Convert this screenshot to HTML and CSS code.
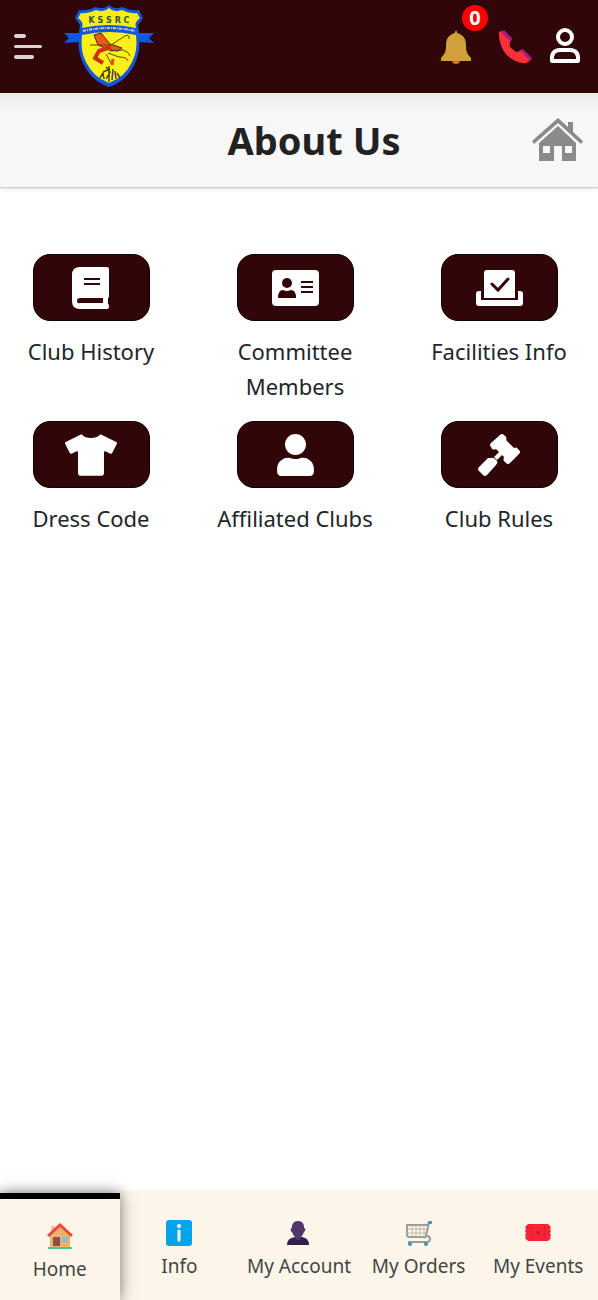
FILE: index.html
```html
<!DOCTYPE html>
<html lang="en">
<head>
<meta charset="utf-8">
<meta name="viewport" content="width=device-width, initial-scale=1">
<title>About Us</title>
<link rel="stylesheet" href="styles.css">
</head>
<body>
<header class="topbar">
  <button class="icon-button menu" aria-label="Menu"><span class="bar bar-short"></span><span class="bar bar-long"></span><span class="bar bar-mid"></span></button>
  <a class="brand" href="#" aria-label="KSSRC">
    <svg width="92" height="84" viewBox="0 0 92 84">
      <path d="M1 28L17 28 17 24 75 24 75 28 91 28 86 33 91 38 76 37 16 37 1 38 6 33Z" fill="#1157e0"/>
      <path d="M16 5Q25 6 32 2Q41 5 46 0Q51 5 60 2Q67 6 76 5L80 13 75 20Q79 44 72 58Q64 76 46 82Q28 76 20 58Q13 44 17 20L12 13Z" fill="#1157e0"/>
      <path d="M18 8Q26 9 33 5Q41 8 46 3Q51 8 59 5Q66 9 74 8L77 13Q71 17 73 23Q46 17 19 23Q21 17 15 13Z" fill="#f7ed15"/>
      <path d="M19 30Q46 24 73 30Q75 46 69 57Q62 72 46 78Q30 72 23 57Q17 46 19 30Z" fill="#fcf01b"/>
      <path d="M20 26Q46 20 72 26" fill="none" stroke="#b9d1c5" stroke-width="2" stroke-dasharray="3 1 1 1"/>
      <text class="crest-text" x="46" y="18" text-anchor="middle">K S S R C</text>
      <path d="M31 30L38 28 47 39 59 43 55 46 46 45 35 40Z" fill="#e85a16" stroke="#4d2812"/>
      <path d="M48 42L36 46 32 53 40 58" fill="none" stroke="#ce3213" stroke-width="4"/>
      <path d="M27 40H48L62 31M62 31Q67 29 66 34M47 46L60 45Q66 47 67 51M45 48L56 52Q64 52 65 56M43 49L49 60" fill="none" stroke="#5b4414" stroke-width="1"/>
      <path d="M50 54L49 60" stroke="#e34b16" stroke-width="3"/>
      <path d="M37 73L40 68 41 74M43 62L47 67 43 74M46 61V77M50 64L49 75M52 66L53 74M54 68L57 73M40 67L47 64" fill="none" stroke="#454219" stroke-width="1.500"/>
    </svg>
  </a>
  <div class="actions">
    <button class="icon-button bell" aria-label="Notifications">
      <svg width="32" height="34" viewBox="0 0 32 34"><path d="M12 30a4 4 0 0 0 8 0z" fill="#e2711d"/><path d="M15 2Q16-1 17 2V3C24 5 26 9 26 16C26 24 29 25 31 28V31H1V28C3 25 6 24 6 16C6 9 8 5 15 3Z" fill="#d2a03a"/></svg>
      <span class="badge">0</span>
    </button>
    <button class="icon-button phone" aria-label="Call">
      <svg width="34" height="34" viewBox="0 0 34 34"><path d="M1 4Q0 1 4 1L13 10Q11 13 12 17L18 22Q21 22 23 20L33 29Q30 34 24 33C10 31 1 18 1 4Z" fill="#fb3038"/><path d="M3 2L6 0 14 8 13 12ZM22 20L25 19 34 28 32 31Z" fill="#a51d83"/></svg>
    </button>
    <button class="icon-button account" aria-label="Profile">
      <svg width="32" height="38" viewBox="0 0 32 38" fill="none" stroke="#fff" stroke-width="4"><circle cx="16" cy="9" r="7"/><path d="M3 33Q2 22 11 22H21Q30 22 29 33Z" stroke-linejoin="round"/></svg>
    </button>
  </div>
</header>

<section class="titlebar">
  <h1 class="title">About Us</h1>
  <a class="home-link" href="#" aria-label="Home">
    <svg width="51" height="44" viewBox="0 0 51 44" fill="#8a8a8a"><path d="M0 23L26 0 36 9V4H41V14L51 23 49 26 26 5 2 26Z"/><path fill-rule="evenodd" d="M7 25L26 8 44 25V43H30V28H22V43H7ZM11 28V35H18V28ZM33 28V35H40V28Z"/></svg>
  </a>
</section>

<main class="tiles">
  <a class="tile" href="#"><span class="tile-icon">
    <svg width="38" height="42" viewBox="0 0 38 42"><path fill="#fff" fill-rule="evenodd" d="M8 0H35Q37 0 37 2V29Q37 31 36 31V37Q37 37 37 39V40Q37 42 35 42H8Q0 42 0 34V8Q0 0 8 0ZM12 11V13H28V11ZM12 16V18H28V16ZM8 31Q5 31 5 34T8 36H31V31Z"/></svg>
  </span><span class="tile-label">Club History</span></a>
  <a class="tile" href="#"><span class="tile-icon">
    <svg width="47" height="36" viewBox="0 0 47 36"><rect width="47" height="36" rx="4" fill="#fff"/><g fill="#310609"><circle cx="15" cy="13" r="5"/><path d="M6 28Q6 20 11 20Q15 22 19 20Q24 20 24 28Z"/><path d="M29 11H41V13H29ZM29 16H41V18H29ZM29 21H41V23H29Z"/></g></svg>
  </span><span class="tile-label">Committee Members</span></a>
  <a class="tile" href="#"><span class="tile-icon">
    <svg width="47" height="36" viewBox="0 0 47 36"><path d="M11 0H36Q39 0 39 3V28H8V3Q8 0 11 0Z" fill="#fff"/><path d="M5 21H3Q0 21 0 24V33Q0 36 3 36H44Q47 36 47 33V24Q47 21 44 21H42V30H5Z" fill="#fff"/><path d="M16 14L22 20 32 9" fill="none" stroke="#310609" stroke-width="3" stroke-linecap="round"/></svg>
  </span><span class="tile-label">Facilities Info</span></a>
  <a class="tile" href="#"><span class="tile-icon">
    <svg width="52" height="42" viewBox="0 0 640 512"><path fill="#fff" d="M631.2 96.5L436.5 0C416.4 27.8 371.9 47.2 320 47.2S223.6 27.8 203.5 0L8.8 96.5c-7.9 4-11.1 13.6-7.2 21.5l57.2 114.5c4 7.9 13.6 11.1 21.5 7.2l56.6-27.7c10.6-5.2 23 2.5 23 14.4V480c0 17.7 14.3 32 32 32h256c17.7 0 32-14.3 32-32V226c0-11.8 12.4-19.6 23-14.4l56.6 27.7c7.9 4 17.5.8 21.5-7.2L638.3 118c4-7.9.8-17.6-7.1-21.5z"/></svg>
  </span><span class="tile-label">Dress Code</span></a>
  <a class="tile" href="#"><span class="tile-icon">
    <svg width="37" height="42" viewBox="0 0 448 512"><path fill="#fff" d="M224 256c70.700 0 128-57.300 128-128S294.700 0 224 0 96 57.300 96 128s57.300 128 128 128zm89.600 32h-16.700c-22.200 10.200-46.900 16-72.900 16s-50.600-5.800-72.900-16h-16.700C60.200 288 0 348.200 0 422.400V464c0 26.500 21.500 48 48 48h352c26.500 0 48-21.500 48-48v-41.600c0-74.200-60.200-134.400-134.400-134.400z"/></svg>
  </span><span class="tile-label">Affiliated Clubs</span></a>
  <a class="tile" href="#"><span class="tile-icon">
    <svg width="42" height="42" viewBox="0 0 42 42" fill="#fff"><path d="M22 1Q24-1 26 1L28 3Q29 5 28 6L36 14Q38 13 39 14L41 16Q43 18 41 20L32 29Q30 31 28 29L26 27Q25 25 26 23L24 21 19 26 16 23 21 18 18 15Q16 16 14 15L13 13Q11 11 13 9Z"/><path d="M13 24Q15 23 17 25L19 27Q20 29 18 31L9 41Q7 43 5 41L1 37Q-1 35 1 33L10 24Z"/></svg>
  </span><span class="tile-label">Club Rules</span></a>
</main>

<nav class="bottom-nav">
  <a class="nav-item nav-active" href="#">
    <svg width="26" height="26" viewBox="0 0 26 26"><path d="M4 3H8V10H4Z" fill="#f2c391"/><path d="M3 12L13 3 23 12V24H3Z" fill="#e9b271"/><path d="M1 13L13 2 25 13" fill="none" stroke="#ef4540" stroke-width="3"/><path d="M6 14H13V23H6Z" fill="#8b5146"/><path d="M15 14H21V19H15Z" fill="#83bbec"/><path d="M1 24H25V26H1Z" fill="#3dce83"/></svg>
    <span>Home</span></a>
  <a class="nav-item" href="#">
    <svg width="26" height="26" viewBox="0 0 26 26"><rect width="26" height="26" rx="3" fill="#05a4ed"/><circle cx="13" cy="6" r="2" fill="#fff"/><path d="M13 11V20" stroke="#fff" stroke-width="3" stroke-linecap="round"/></svg>
    <span>Info</span></a>
  <a class="nav-item" href="#">
    <svg width="26" height="26" viewBox="0 0 26 26"><path d="M1 25Q1 18 9 17H16Q23 18 23 25Z" fill="#31204a"/><path d="M6 6Q7 1 12 1T18 6V8Q20 8 19 11L18 12Q17 15 15 17V19Q12 21 9 19V17Q7 15 6 12Q4 11 5 8H6Z" fill="#54366b"/></svg>
    <span>My Account</span></a>
  <a class="nav-item" href="#">
    <svg width="26" height="26" viewBox="0 0 26 26" fill="none" stroke="#9b9b98"><path d="M23 2L20 16Q20 18 17 17H3Q1 17 1 14V5H22M2 22H21Q24 22 24 19T21 16" stroke-width="2"/><path d="M6 5V17M10 5V17M14 5V17M18 5V17M1 9H21M1 13H20" stroke="#bbb9b2"/><g fill="#3794c4" stroke="none"><rect x="22" y="1" width="4" height="3" rx="1"/><circle cx="4" cy="24" r="2"/><circle cx="20" cy="24" r="2"/></g></svg>
    <span>My Orders</span></a>
  <a class="nav-item" href="#">
    <svg width="26" height="26" viewBox="0 0 26 26"><path d="M3 4H23L26 7 25 9 26 11 25 13 26 15 25 17 26 18 23 21H3L0 18 1 17 0 15 1 13 0 11 1 9 0 7Z" fill="#f52536"/><path d="M6 7V18M20 7V18" stroke="#d5172b" stroke-dasharray="2 1"/><path d="M11 11L15 14M15 11L12 14" stroke="#b71428"/></svg>
    <span>My Events</span></a>
</nav>
</body>
</html>
```
FILE: styles.css
```css
* { box-sizing: border-box; }
body {
  margin: 0;
  min-height: 100vh;
  display: flex;
  flex-direction: column;
  background: #fff;
  color: #212529;
  font-family: "Noto Sans", "Open Sans", sans-serif;
}
a { color: inherit; text-decoration: none; }
svg { display: block; flex: none; }
.icon-button { border: 0; padding: 0; background: none; cursor: pointer; }

.topbar {
  display: flex;
  align-items: center;
  height: 93px;
  padding: 0 17px 0 14px;
  background: #310609;
}
.menu { display: grid; gap: 7px; width: 28px; }
.bar { height: 4px; border-radius: 2px; background: #ded3d1; }
.bar-short { width: 12px; }
.bar-long { width: 28px; height: 3px; }
.bar-mid { width: 20px; }
.brand { margin-left: 21px; }
.crest-text { font: bold 8px "DejaVu Sans", sans-serif; fill: #315343; }
.actions { display: flex; align-items: center; gap: 26px; margin-left: auto; }
.bell { position: relative; }
.phone { margin-right: -9px; }
.badge {
  position: absolute;
  left: 22px;
  top: -25px;
  width: 26px;
  height: 26px;
  border-radius: 50%;
  background: #f00;
  color: #fff;
  font: bold 20px/26px "Noto Sans", sans-serif;
  text-align: center;
}

.titlebar {
  display: flex;
  align-items: center;
  height: 95px;
  padding: 0 15px 0 96px;
  background: linear-gradient(#ebece8, #f7f7f7 20px);
  border-bottom: 1px solid #ccc;
  box-shadow: 0 1px 4px #0002;
}
.title { flex: 1; margin: 0; color: #222; font-size: 38px; line-height: 48px; text-align: center; }

.tiles {
  flex: 1;
  display: grid;
  grid-template-columns: repeat(3, minmax(0, 1fr));
  align-content: start;
  gap: 17px 38px;
  padding: 66px 16px 24px 8px;
}
.tile { display: flex; flex-direction: column; align-items: center; gap: 13px; }
.tile-icon {
  display: flex;
  align-items: center;
  justify-content: center;
  width: 117px;
  height: 67px;
  border: 1px solid #120204;
  border-radius: 17px;
  background: #310609;
}
.tile-label { font-size: 22px; line-height: 35px; text-align: center; }

.bottom-nav {
  display: grid;
  grid-template-columns: repeat(5, minmax(0, 1fr));
  height: 110px;
  background: #fbf6e9;
}
.nav-item {
  display: flex;
  flex-direction: column;
  align-items: center;
  gap: 6px;
  padding-top: 30px;
  color: #444;
  font-size: 19px;
  line-height: 28px;
  white-space: nowrap;
}
.nav-active {
  margin-top: 3px;
  padding-top: 24px;
  border-top: 6px solid #000;
  box-shadow: 0 0 14px #0008;
}
```
